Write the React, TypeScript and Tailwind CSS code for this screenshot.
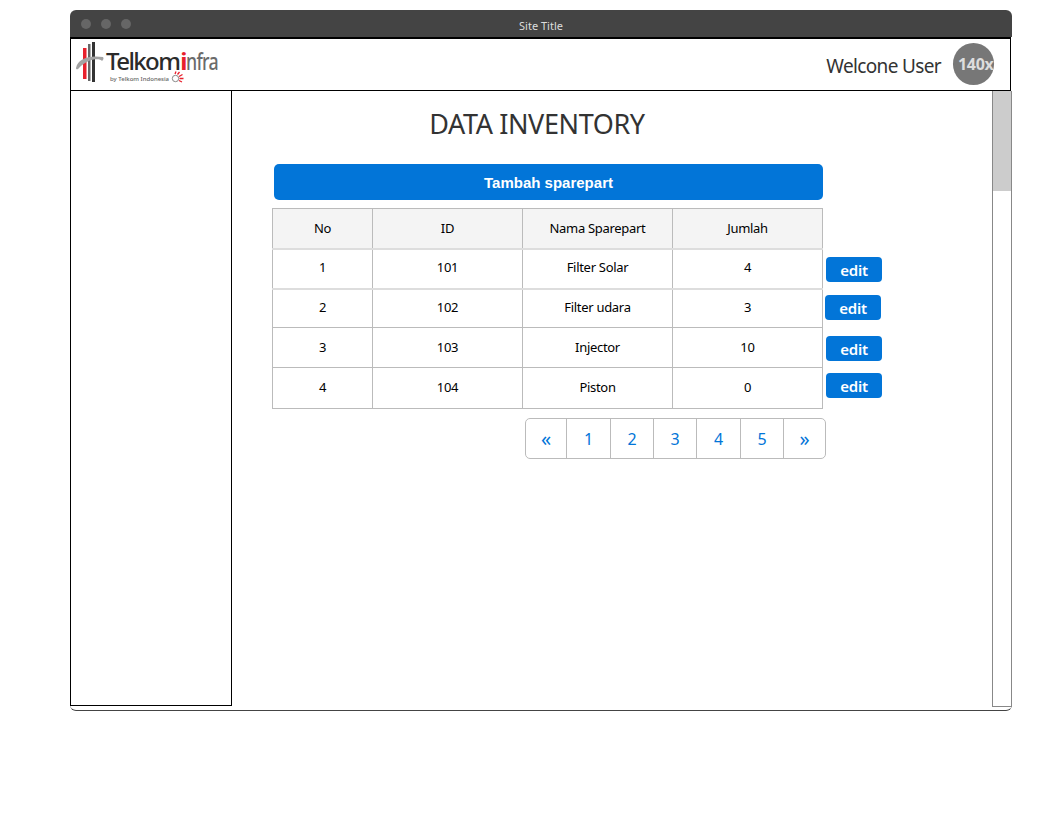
import React from 'react';

const rows = [
  { no: 1, id: 101, name: 'Filter Solar', qty: 4, cls: 'h-[40px]', cell: 'pb-[2px] border-b-2 border-b-[#ddd]' },
  { no: 2, id: 102, name: 'Filter udara', qty: 3, cls: 'h-[39px]', cell: 'pb-[2px]' },
  { no: 3, id: 103, name: 'Injector', qty: 10, cls: 'h-[40px]', cell: '' },
  { no: 4, id: 104, name: 'Piston', qty: 0, cls: 'h-[41px]', cell: '' },
];

const pages = [
  { label: '«', w: 'w-[41px] text-[20px]' },
  { label: '1', w: 'w-[44px] text-[16px]' },
  { label: '2', w: 'w-[43px] text-[16px]' },
  { label: '3', w: 'w-[43px] text-[16px]' },
  { label: '4', w: 'w-[44px] text-[16px]' },
  { label: '5', w: 'w-[43px] text-[16px]' },
  { label: '»', w: 'w-[41px] text-[20px]' },
];

function Logo() {
  return (
    <div className="flex items-start w-[146px] h-[44px] -mt-[2px]">
      <svg width="30" height="42" viewBox="0 0 30 42" className="shrink-0">
        <rect x="7" y="6" width="3.5" height="31" fill="#e8202c" />
        <rect x="12" y="2" width="2.5" height="37" fill="#666" />
        <rect x="16" y="0" width="3" height="40" fill="#333" />
        <path d="M0 26 C2 17 12 13 27 15 C28 16 27.5 18 26 19 C24 16 12 16 3 26 C2 27.5 0 28 0 26Z" fill="#a3a3a3" />
      </svg>
      <div className="flex flex-col">
        <div className="flex items-baseline text-[24px] leading-[28px] mt-[5px] tracking-[-1.6px] font-medium text-[#2b2b2b]">
          <span>Telkom</span>
          <span className="text-[#e8202c] font-bold ml-px">i</span>
          <span className="inline-block origin-left scale-x-[0.74] text-[#6b6b6b] tracking-[-1px]">nfra</span>
        </div>
        <div className="flex items-center ml-[4px] text-[6px] leading-[8px] text-[#666] font-medium">
          <span>by Telkom Indonesia</span>
          <svg width="13" height="12" viewBox="0 0 13 12" className="ml-[2px] -mt-[4px]">
            <circle cx="4.5" cy="7.5" r="3.2" fill="none" stroke="#888" strokeWidth="1" />
            <path d="M4 3 L5 0.5 M6.5 3.5 L8.5 1 M8 5.5 L11.5 3.5 M8.5 7.5 L12.5 7.5 M8 9.5 L11 11" stroke="#e8202c" strokeWidth="1.3" />
          </svg>
        </div>
      </div>
    </div>
  );
}

function EditButton({ className }: { className: string }) {
  return (
    <button className={`w-14 h-[25px] pt-px rounded-[4px] bg-[#0275d8] text-white text-[15px] font-semibold tracking-[-0.2px] flex items-center justify-center ${className}`}>
      edit
    </button>
  );
}

export default function App() {
  return (
    <div className="w-[1062px] h-[821px] bg-white pl-[70px] pt-[10px] font-['Noto_Sans',sans-serif] text-[#333]">
      <div className="w-[942px] h-[701px] flex flex-col border-b border-[#444] rounded-[6px]">
        <div className="h-[27px] shrink-0 bg-[#444] rounded-t-[6px] flex items-center relative px-[11px] gap-[10px]">
          <span className="w-[10px] h-[10px] rounded-full bg-[#666]" />
          <span className="w-[10px] h-[10px] rounded-full bg-[#666]" />
          <span className="w-[10px] h-[10px] rounded-full bg-[#666]" />
          <span className="absolute inset-x-0 top-[8px] text-center text-[11px] leading-[16px] text-[#ddd]">Site Title</span>
        </div>
        <div className="h-[54px] shrink-0 w-[941px] border border-black border-t-2 flex items-center justify-between pl-[5px] pr-[16px]">
          <Logo />
          <div className="flex items-center gap-[12px]">
            <span className="text-[19px] tracking-[-0.65px] mt-[4px]">Welcone User</span>
            <div className="w-[41px] h-[42px] -mt-px rounded-full bg-[#777] overflow-hidden flex items-center pl-[5px]">
              <span className="text-[#ddd] text-[16px] font-bold tracking-[-0.3px] whitespace-nowrap">140x</span>
            </div>
          </div>
        </div>
        <div className="flex flex-1 min-h-0">
          <div className="w-[162px] h-[615px] border-x border-b border-black shrink-0" />
          <main className="flex-1 pl-[40px]">
            <h1 className="w-[530px] text-center text-[27px] leading-[40px] mt-[13px] tracking-[-0.4px]">DATA INVENTORY</h1>
            <button className="block ml-[2px] mt-[20px] w-[549px] h-[36px] pt-[2px] rounded-[5px] bg-[#0275d8] text-white text-[15px] font-bold font-['Liberation_Sans',sans-serif]">
              Tambah sparepart
            </button>
            <div className="flex mt-[8px]">
              <table className="w-[551px] h-[201px] table-fixed border-collapse text-[13px] tracking-[-0.3px] text-black">
                <colgroup>
                  <col className="w-[100px]" />
                  <col className="w-[150px]" />
                  <col className="w-[150px]" />
                  <col className="w-[150px]" />
                </colgroup>
                <thead>
                  <tr className="h-[40px] bg-[#f4f4f4]">
                    {['No', 'ID', 'Nama Sparepart', 'Jumlah'].map(h => (
                      <th key={h} className="border border-[#bbb] border-b-2 border-b-[#ddd] font-normal">{h}</th>
                    ))}
                  </tr>
                </thead>
                <tbody>
                  {rows.map(r => (
                    <tr key={r.no} className={`${r.cls} text-center`}>
                      <td className={`border border-[#bbb] ${r.cell}`}>{r.no}</td>
                      <td className={`border border-[#bbb] ${r.cell}`}>{r.id}</td>
                      <td className={`border border-[#bbb] ${r.cell}`}>{r.name}</td>
                      <td className={`border border-[#bbb] ${r.cell}`}>{r.qty}</td>
                    </tr>
                  ))}
                </tbody>
              </table>
              <div className="flex flex-col pt-[49px] ml-[3px]">
                <EditButton className="" />
                <EditButton className="mt-[13px] -ml-px" />
                <EditButton className="mt-[16px]" />
                <EditButton className="mt-[12px]" />
              </div>
            </div>
            <div className="flex ml-[253px] mt-[9px] w-[301px] h-[41px] border border-[#bbb] rounded-[5px] divide-x divide-[#bbb]">
              {pages.map(p => (
                <span key={p.label} className={`${p.w} shrink-0 flex items-center justify-center text-[#0275d8]`}>{p.label}</span>
              ))}
            </div>
          </main>
          <div className="w-[20px] h-[616px] border-x border-b border-[#888] shrink-0">
            <div className="h-[100px] bg-[#ccc]" />
          </div>
        </div>
      </div>
    </div>
  );
}
